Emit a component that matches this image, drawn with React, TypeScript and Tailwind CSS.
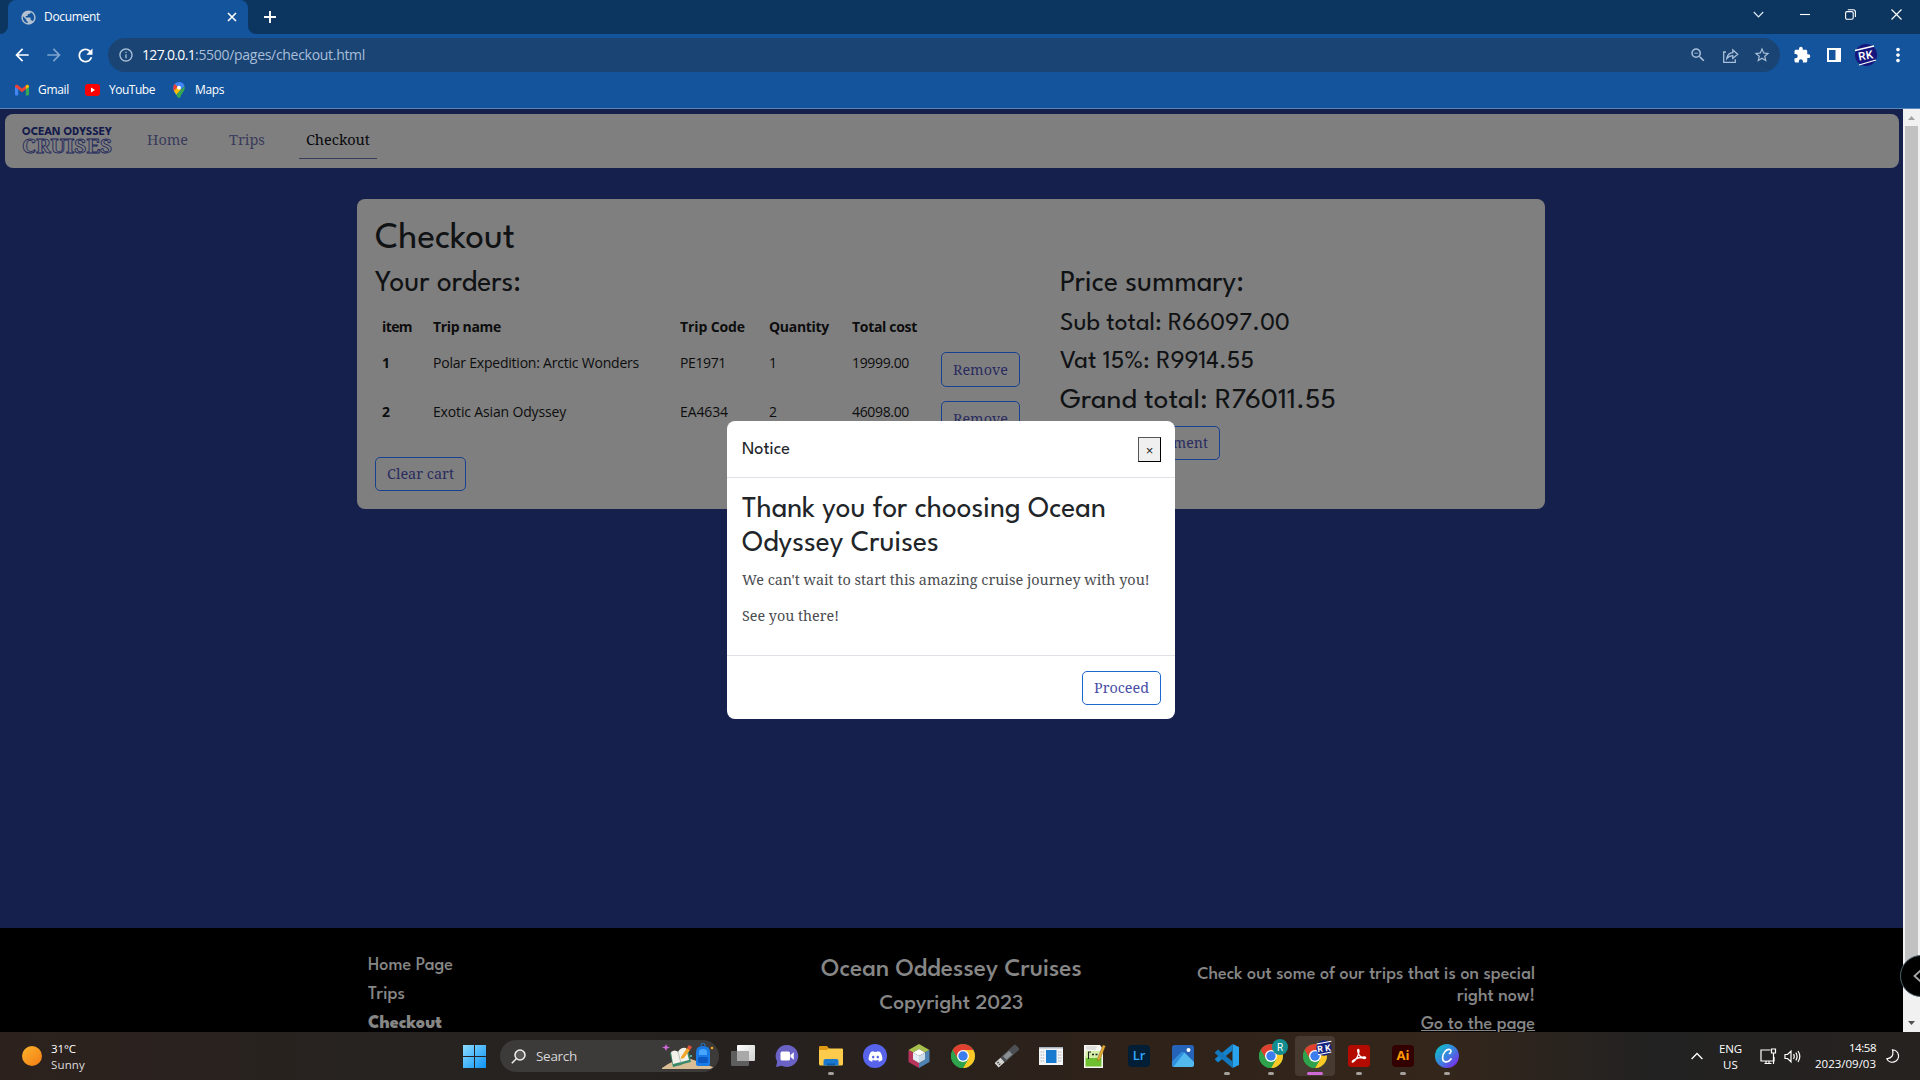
import React, { useLayoutEffect, useRef } from "react";
import { FaDiscord } from "react-icons/fa";
import {
  MdArrowBack,
  MdArrowForward,
  MdExtension,
  MdInfoOutline,
  MdMoreVert,
  MdPublic,
  MdRefresh,
  MdStarBorder,
  MdZoomOut,
} from "react-icons/md";

type FitProps = { w: number; className?: string; children: string; scale?: boolean };

/** One line of text that measures `w` pixels, by tracking or by font size. */
function Fit({ w, className = "", children, scale }: FitProps) {
  const ref = useRef<HTMLSpanElement>(null);
  useLayoutEffect(() => {
    const el = ref.current;
    if (!el) return;
    el.style.letterSpacing = "0px";
    el.style.fontSize = "";
    const natural = el.getBoundingClientRect().width;
    if (scale) {
      el.style.fontSize = (parseFloat(getComputedStyle(el).fontSize) * w) / natural + "px";
    } else {
      el.style.letterSpacing = (w - natural) / children.length + "px";
    }
  }, [w, children, scale]);
  return (
    <span ref={ref} className={"inline-block whitespace-nowrap align-top " + className}>
      {children}
    </span>
  );
}

const SERIF = "font-['Noto_Serif','DejaVu_Serif_Condensed','DejaVu_Serif',serif]";
const SPARTAN = "font-['League_Spartan',Lato,sans-serif] font-[450]";
const SEGOE = "font-['Open_Sans','Noto_Sans',sans-serif]";

/* ---------- browser chrome ---------- */

function TabStrip() {
  return (
    <div className="flex h-[34px] items-stretch bg-[#0c3560] text-white">
      <div className="flex w-2 items-end">
        <div className="h-2 w-2 bg-[#14549c]">
          <div className="h-2 w-2 rounded-br-lg bg-[#0c3560]" />
        </div>
      </div>
      <div className="flex w-[240px] items-center rounded-t-lg bg-[#14549c] pl-3 pr-[10px]">
        <MdPublic className="size-[17px] text-[#b4c1cf]" />
        <Fit w={56} className="ml-[7px] text-[12px] leading-4">Document</Fit>
        <svg className="ml-auto size-[12px]" viewBox="0 0 12 12" stroke="#fff" strokeWidth="1.6">
          <path d="M2 2l8 8M10 2l-8 8" />
        </svg>
      </div>
      <div className="flex w-2 items-end">
        <div className="h-2 w-2 bg-[#14549c]">
          <div className="h-2 w-2 rounded-bl-lg bg-[#0c3560]" />
        </div>
      </div>
      <svg className="ml-[8px] mt-[11px] size-[12px]" viewBox="0 0 12 12" stroke="#fff" strokeWidth="1.9">
        <path d="M6 0v12M0 6h12" />
      </svg>
      <div className="ml-auto flex h-[28px] items-center gap-[35px] pr-[18px]">
        <svg className="mr-px size-[11px]" viewBox="0 0 11 11" fill="none" stroke="#e2eaf3" strokeWidth="1.2">
          <path d="M.8 3l4.7 4.8L10.200 3" />
        </svg>
        <svg className="size-[10px]" viewBox="0 0 10 10" stroke="#fff" strokeWidth="1.100">
          <path d="M0 5.500h10" />
        </svg>
        <svg className="size-[11px]" viewBox="0 0 11 11" fill="none" stroke="#fff" strokeWidth="1.100">
          <rect x=".6" y="2.600" width="7.600" height="7.600" rx="1.400" />
          <path d="M2.800 .8h5.400a2.200 2.200 0 0 1 2.200 2.200v5" />
        </svg>
        <svg className="size-[11px]" viewBox="0 0 11 11" stroke="#fff" strokeWidth="1.200">
          <path d="M.5 .5l10 10M10.500 .5l-10 10" />
        </svg>
      </div>
    </div>
  );
}

function Avatar() {
  return (
    <svg className="size-[24px]" viewBox="0 0 24 24">
      <circle cx="12" cy="12" r="11" fill="#15177d" />
      <path d="M1 7.500L20 3M5 22l17-5" stroke="#fff" strokeWidth="1.300" />
      <text x="4" y="16.500" fontSize="11.500" fontWeight="500" fill="#fff" fontFamily="Roboto" textLength="15" transform="rotate(-10 12 12)">RK</text>
    </svg>
  );
}

function Toolbar() {
  return (
    <div className="flex h-[42px] items-center bg-[#14549c] text-white">
      <MdArrowBack className="ml-3 size-[20px]" />
      <MdArrowForward className="ml-3 size-[20px] text-[#7fa3cd]" />
      <MdRefresh className="ml-[11px] size-[21px]" />
      <div className="ml-[12px] flex h-[34px] w-[1672px] items-center rounded-full bg-[#1a4473] pl-[10px] text-[#a9bfd9]">
        <MdInfoOutline className="size-[16px]" />
        <div className={"ml-[8px] text-[14px] leading-5 " + SEGOE}>
          <Fit w={53} className="text-white">127.0.0.1</Fit>
          <Fit w={170}>:5500/pages/checkout.html</Fit>
        </div>
        <div className="ml-auto flex items-center pr-[9px]">
          <MdZoomOut className="size-[18px]" />
          <svg className="ml-[15px] size-[17px]" viewBox="0 0 17 17" fill="none" stroke="currentColor" strokeWidth="1.300">
            <path d="M4 5H1.700v10.300h11.600v-3M4.800 11.500c.5-3.600 2.600-5.600 6-5.900V3l4.900 4.200-4.900 4.200V8.700c-2.600.1-4.500 1-6 2.800z" />
          </svg>
          <MdStarBorder className="ml-[14px] size-[18px]" />
        </div>
      </div>
      <MdExtension className="ml-[13px] size-[18px]" />
      <svg className="ml-[16px] size-[14px]" viewBox="0 0 14 14" fill="#fff">
        <path d="M0 0h14v14H0zM2 2v10h6.500V2z" fillRule="evenodd" />
      </svg>
      <div className="ml-[13px]"><Avatar /></div>
      <MdMoreVert className="ml-[9px] size-[22px]" />
    </div>
  );
}

function Bookmarks() {
  return (
    <div className={"flex h-[33px] items-start border-b border-[#5b86b8] bg-[#14549c] pt-[6px] text-[12px] leading-4 text-white " + SEGOE}>
      <svg className="ml-[15px] mt-[2px] h-[12px] w-[14px]" viewBox="0 0 14 11">
        <path d="M0 1.500V10q0 1 1 1h2.200V4.500z" fill="#4285f4" />
        <path d="M10.800 11H13q1 0 1-1V1.500l-3.200 3z" fill="#34a853" />
        <path d="M0 1.800C0 .3 1.500-.3 2.600.5L7 4 11.400.5 10.800 4.800 7 7.700 3.200 4.800 0 2.500z" fill="#ea4335" />
        <path d="M10.800 4.800V1L11.400.5C12.500-.3 14 .3 14 1.800v.7z" fill="#fbbc04" />
      </svg>
      <Fit w={31} className="ml-[9px]">Gmail</Fit>
      <svg className="ml-[16px] mt-[2px] h-[12px] w-[15px]" viewBox="0 0 15 12">
        <rect width="15" height="12" rx="3" fill="#f00" />
        <path d="M6 3.500v5L10 6z" fill="#fff" />
      </svg>
      <Fit w={46} className="ml-[9px]">YouTube</Fit>
      <svg className="ml-[18px] h-[16px] w-[12px]" viewBox="0 0 12 16">
        <path d="M6 0a5.700 5.700 0 0 1 5.500 4L3 13C2 11 .3 9.500.3 6A5.700 5.700 0 0 1 6 0z" fill="#4285f4" />
        <path d="M.3 6C.3 4 1 2.800 2 2l3 3-4 4.500A7 7 0 0 1 .3 6z" fill="#ea4335" />
        <path d="M1 9l4-4.500 3 3L3.500 13z" fill="#fbbc04" />
        <path d="M11.500 4c.8 3-.5 5-2 7-1.500 1.800-2 5-3.500 5-1.300 0-1.800-1.800-2.700-3.300z" fill="#34a853" />
        <circle cx="6" cy="5.700" r="1.900" fill="#fff" />
      </svg>
      <Fit w={29} className="ml-[10px]">Maps</Fit>
    </div>
  );
}

/* ---------- page ---------- */

function OutlineButton({ w, className = "", children }: FitProps) {
  return (
    <button className={"flex items-center justify-center rounded-[5px] border border-[#17408f] text-[14.5px] font-normal text-[#2a2c60] " + SERIF + " " + className}>
      <Fit scale w={w}>{children}</Fit>
    </button>
  );
}

function Navbar() {
  return (
    <nav className={"mx-[5px] mt-[5px] flex h-[54px] w-[1894px] items-start rounded-lg bg-[#7f7f7f] text-[14.5px] leading-5 text-[#393b5b] " + SERIF}>
      <svg className="ml-[17px] mt-[11px] h-[30px] w-[91px]" viewBox="0 0 91 30">
        <text x="0" y="10" fontFamily="League Spartan, Lato" fontWeight="700" fontSize="12.500" fill="#141b4c" textLength="90" lengthAdjust="spacingAndGlyphs">OCEAN ODYSSEY</text>
        <text x="0" y="27.500" fontFamily="Noto Serif, DejaVu Serif" fontWeight="700" fontSize="19.500" fill="#7f7f7f" stroke="#20265a" strokeWidth=".8" textLength="90" lengthAdjust="spacingAndGlyphs">CRUISES</text>
      </svg>
      <Fit scale w={41} className="ml-[34px] mt-[16px]">Home</Fit>
      <Fit scale w={36} className="ml-[41px] mt-[15px]">Trips</Fit>
      <div className="ml-[34px] flex h-[45px] w-[78px] justify-center border-b border-[#393b5b] pt-[15px] text-[#08080c]">
        <Fit scale w={64}>Checkout</Fit>
      </div>
    </nav>
  );
}

const COLS = "grid grid-cols-[51px_247px_89px_83px_89px_79px] items-start justify-items-start pl-[7px]";

type Order = { n: string; name: string; nameW: number; code: string; codeW: number; qty: string; cost: string };
const ORDERS: Order[] = [
  { n: "1", name: "Polar Expedition: Arctic Wonders", nameW: 206, code: "PE1971", codeW: 46, qty: "1", cost: "19999.00" },
  { n: "2", name: "Exotic Asian Odyssey", nameW: 133, code: "EA4634", codeW: 48, qty: "2", cost: "46098.00" },
];

function CheckoutCard() {
  return (
    <section className="mt-[31px] ml-[357px] flex h-[310px] w-[1188px] flex-col rounded-lg bg-[#7f7f7f] pt-[20px] pl-[18px] text-[#101214]">
      <h1 className={"h-[39px] text-[34px] leading-10 " + SPARTAN}><Fit scale w={140}>Checkout</Fit></h1>
      <div className="flex">
        <div className="w-[685px]">
          <h2 className={"mt-[10px] h-8 text-[27px] leading-8 " + SPARTAN}><Fit scale w={146}>Your orders:</Fit></h2>
          <div className={"text-[14px] leading-5 text-[#0d0d0e] " + SEGOE}>
            <div className={COLS + " mt-[17px] h-[34px] font-bold"}>
              <Fit w={30}>item</Fit>
              <Fit w={68}>Trip name</Fit>
              <Fit w={65}>Trip Code</Fit>
              <Fit w={60}>Quantity</Fit>
              <Fit w={65}>Total cost</Fit>
            </div>
            {ORDERS.map((o) => (
              <div key={o.n} className={COLS + " h-[49px]"}>
                <span className="mt-[2px] font-bold">{o.n}</span>
                <Fit w={o.nameW} className="mt-[2px]">{o.name}</Fit>
                <Fit w={o.codeW} className="mt-[2px]">{o.code}</Fit>
                <span className="mt-[2px]">{o.qty}</span>
                <Fit w={57} className="mt-[2px]">{o.cost}</Fit>
                <OutlineButton w={55} className="mt-[1px] h-[35px] w-[79px] pt-[1px]">Remove</OutlineButton>
              </div>
            ))}
          </div>
          <OutlineButton w={67} className="mt-[8px] h-[34px] w-[91px]">Clear cart</OutlineButton>
        </div>
        <div className={SPARTAN}>
          <h2 className="mt-[10px] h-8 text-[27px] leading-8"><Fit scale w={184}>Price summary:</Fit></h2>
          <h3 className="mt-[10px] h-7 text-[24px] leading-7"><Fit scale w={230}>Sub total: R66097.00</Fit></h3>
          <h3 className="mt-[10px] h-7 text-[24px] leading-7"><Fit scale w={194}>Vat 15%: R9914.55</Fit></h3>
          <h2 className="mt-[9px] h-8 text-[27px] leading-8"><Fit scale w={276}>Grand total: R76011.55</Fit></h2>
          <OutlineButton w={119} className="mt-[9px] h-[34px] w-[160px] pl-[17px]">Confirm payment</OutlineButton>
        </div>
      </div>
    </section>
  );
}

function Modal() {
  return (
    <div className={"absolute left-[727px] top-[312px] flex h-[298px] w-[448px] flex-col rounded-lg bg-white text-[14.5px] text-[#4a4c50] " + SERIF}>
      <div className="flex h-[57px] items-start justify-between border-b border-[#dee2e6] pt-[16px] pr-[14px] pl-[15px]">
        <h5 className={"mt-[3px] text-[16px] leading-5 text-[#212529] " + SPARTAN}><Fit scale w={48}>Notice</Fit></h5>
        <button className="flex h-[25px] w-[23px] items-center justify-center border border-t-[#555] border-r-black border-b-black border-l-[#555] bg-[#efefef] pt-[2px] font-['Liberation_Sans'] text-[13px] text-[#222]">
          <span>×</span>
        </button>
      </div>
      <div className="h-[178px] border-b border-[#dee2e6] pt-[15px] pl-[15px]">
        <h2 className={"flex flex-col items-start text-[27px] leading-[34px] text-[#212529] " + SPARTAN}>
          <Fit scale w={364}>Thank you for choosing Ocean</Fit>
          <Fit scale w={197}>Odyssey Cruises</Fit>
        </h2>
        <p className="mt-[7px] h-6 leading-6"><Fit scale w={408}>We can't wait to start this amazing cruise journey with you!</Fit></p>
        <p className="mt-[12px] h-6 leading-6"><Fit scale w={97}>See you there!</Fit></p>
      </div>
      <div className="flex justify-end pt-[15px] pr-[14px]">
        <button className="flex h-[34px] w-[79px] items-center justify-center rounded-[5px] border border-[#1d68d0] text-[#4a4fa5]">
          <Fit scale w={55}>Proceed</Fit>
        </button>
      </div>
    </div>
  );
}

function Footer() {
  return (
    <footer className="mt-auto flex h-[104px] w-full shrink-0 overflow-hidden bg-black pl-[368px] font-['League_Spartan',Lato,sans-serif] text-[17px] font-medium text-[#868686]">
      <div className="flex w-[400px] flex-col items-start pt-[23px] leading-[29px]">
        <Fit scale w={85}>Home Page</Fit>
        <Fit scale w={37}>Trips</Fit>
        <Fit scale w={74} className="font-extrabold">Checkout</Fit>
      </div>
      <div className="flex w-[367px] flex-col items-center pt-[25px]">
        <h3 className="h-[34px] text-[24px] leading-[34px]"><Fit scale w={261}>Ocean Oddessey Cruises</Fit></h3>
        <h4 className="h-[34px] text-[20px] leading-[34px]"><Fit scale w={144}>Copyright 2023</Fit></h4>
      </div>
      <div className="flex w-[400px] flex-col items-end pt-[36px] leading-[22px]">
        <Fit scale w={338}>Check out some of our trips that is on special</Fit>
        <Fit scale w={78}>right now!</Fit>
        <Fit scale w={114} className="mt-[6px] underline">Go to the page</Fit>
      </div>
    </footer>
  );
}

function Scrollbar() {
  return (
    <div className="flex h-[923px] w-[17px] flex-col items-center bg-[#f1f1f1]">
      <svg className="h-[17px] w-[17px]" viewBox="0 0 17 17"><path d="M5 11l3.500-4 3.500 4z" fill="#a3a3a3" /></svg>
      <div className="h-[850px] w-[13px] bg-[#c1c1c1]" />
      <svg className="mt-auto h-[17px] w-[17px]" viewBox="0 0 17 17"><path d="M5 6l3.500 4L12 6z" fill="#505050" /></svg>
    </div>
  );
}

/* ---------- taskbar ---------- */

function Chrome() {
  return (
    <svg className="size-6" viewBox="0 0 24 24">
      <circle cx="12" cy="12" r="12" fill="#2fa24c" />
      <path d="M12 12L1.610 6A12 12 0 0 1 22.390 6z" fill="#e0402f" />
      <path d="M12 6h10.390A12 12 0 0 1 12 24l5.200-9z" fill="#fcc826" />
      <path d="M1.610 6L6.800 15 12 6z" fill="#e0402f" />
      <path d="M1.610 6A12 12 0 0 0 12 24l5.200-9H6.800z" fill="#2fa24c" />
      <circle cx="12" cy="12" r="6" fill="#fff" />
      <circle cx="12" cy="12" r="4.700" fill="#3b7ded" />
    </svg>
  );
}

function TaskCell({ children, running, active }: { children: React.ReactNode; running?: boolean; active?: boolean }) {
  return (
    <div className="relative flex h-12 w-[44px] items-center justify-center">
      {active && <div className="absolute inset-x-[2px] inset-y-[4px] rounded bg-white/10" />}
      <div className="relative">{children}</div>
      {running && <div className="absolute bottom-[5px] h-[3px] w-[6px] rounded-full bg-[#a5a09b]" />}
      {active && <div className="absolute bottom-[5px] h-[3px] w-[16px] rounded-full bg-[#cf6ad6]" />}
    </div>
  );
}

function TaskIcons() {
  return (
    <>
      <TaskCell>
        <svg className="size-6" viewBox="0 0 24 24">
          <defs><linearGradient id="tv" x2="1" y2="1"><stop stopColor="#fff" /><stop offset="1" stopColor="#cfcfcf" /></linearGradient></defs>
          <rect x="0" y="7" width="18" height="15" rx="1" fill="#5e5e5e" />
          <rect x="6" y="1" width="18" height="16" rx="1" fill="url(#tv)" />
          <rect x="6" y="7" width="12" height="10" fill="#a9a9a9" />
        </svg>
      </TaskCell>
      <TaskCell>
        <svg className="size-6" viewBox="0 0 24 24">
          <path d="M12 1a11.500 11 0 1 1-5.500 20.800L1 23l1.200-5.500A11.300 11 0 0 1 12 1z" fill="#6a62c4" />
          <rect x="5.500" y="7.500" width="9.500" height="9" rx="1.500" fill="#fff" />
          <path d="M15.500 11l3.300-2.700v7.400L15.500 13z" fill="#fff" />
        </svg>
      </TaskCell>
      <TaskCell running>
        <svg className="size-6" viewBox="0 0 24 24">
          <path d="M0 3q0-1 1-1h7l2.500 3H23v8H0z" fill="#e09b16" />
          <path d="M0 6h8l2-1.500h13q1 0 1 1V20q0 1.500-1.500 1.500h-21Q0 21.500 0 20z" fill="#fccb4b" />
          <path d="M4.500 21.500V17q0-2 2-2h11q2 0 2 2v4.500z" fill="#1a78cf" />
          <path d="M8 21.500v-2h8v2z" fill="#0d5aa6" />
        </svg>
      </TaskCell>
      <TaskCell>
        <div className="flex size-6 items-center justify-center rounded-full bg-[#5663ea] text-white"><FaDiscord className="size-[15px]" /></div>
      </TaskCell>
      <TaskCell>
        <svg className="size-6" viewBox="0 0 24 24">
          <path d="M12 0l10.500 6-4.500 2.500L12 5 6 8.500 1.500 6z" fill="#a6bf4d" />
          <path d="M1.500 6L6 8.500v7l6 3.500v5L1.500 18z" fill="#b8345a" />
          <path d="M22.500 6L18 8.500v7L12 19v5l10.500-6z" fill="#4e83b4" />
          <path d="M12 5l6 3.500-6 3.500-6-3.500z" fill="#fff" />
          <path d="M6 8.500l6 3.500v7l-6-3.500z" fill="#e4edf5" />
          <path d="M18 8.500L12 12v7l6-3.500z" fill="#cbdbe8" />
        </svg>
      </TaskCell>
      <TaskCell><Chrome /></TaskCell>
      <TaskCell>
        <svg className="size-6" viewBox="0 0 24 24">
          <g transform="rotate(-42 12 12)">
            <rect x="6" y="8.500" width="20" height="7" rx="1.500" fill="#4c5054" />
            <rect x="9" y="9.500" width="8" height="5" fill="#8b9094" />
            <rect x="-2" y="9" width="8" height="6" fill="#d5d5d3" />
            <rect x="0" y="10.300" width="2" height="1.200" fill="#444" />
            <rect x="0" y="12.600" width="2" height="1.200" fill="#444" />
          </g>
        </svg>
      </TaskCell>
      <TaskCell>
        <svg className="size-6" viewBox="0 0 24 24">
          <rect x="0" y="3" width="24" height="18" fill="#f3f5f7" />
          <rect x="0" y="3" width="24" height="1.500" fill="#a9b4bd" />
          <rect x="7" y="6" width="10.500" height="13" fill="#187bd0" />
          <path d="M1.500 8h4M1.500 11h4M1.500 14h4M1.500 17h4M19 8h3.500M19 11h3.500M19 14h3.500M19 17h3.500" stroke="#a7b0b8" strokeWidth=".9" strokeDasharray="1.500 .7" />
        </svg>
      </TaskCell>
      <TaskCell>
        <svg className="size-6" viewBox="0 0 24 24">
          <path d="M1 1h16l3 4v19H1z" fill="#f7f7f2" />
          <path d="M2.500 12h16v10.500h-16z" fill="#6fc02f" />
          <path d="M2.500 7h16v7h-16z" fill="#d5eea9" />
          <path d="M3 3h11M3 5h10" stroke="#bbb" strokeWidth=".8" />
          <path d="M5 8h3M5.500 8v7" stroke="#222" strokeWidth="1.100" />
          <path d="M9 10.500h2M12.500 10.500h2" stroke="#222" strokeWidth="1.500" />
          <path d="M14.500 14.500l5.500-13.500 2.500 1L17 15.500l-2.500 1.500z" fill="#e2a934" stroke="#76561a" strokeWidth=".4" />
        </svg>
      </TaskCell>
      <TaskCell><div className="flex size-[22px] items-center justify-center rounded bg-[#001e36] font-['Open_Sans'] text-[13px] font-semibold text-[#31a8ff]">Lr</div></TaskCell>
      <TaskCell>
        <svg className="size-[22px]" viewBox="0 0 22 22">
          <rect width="22" height="22" rx="2.500" fill="#2563b8" />
          <path d="M0 17l9-9q2-2 4 0l9 9v2.500q0 2.500-2.500 2.500h-17Q0 22 0 19.500z" fill="#51b9ee" />
          <path d="M0 17l9-9q2-2 3.500-.5L2 21.300Q0 21 0 19.500z" fill="#2f8fdd" />
          <circle cx="16.500" cy="5" r="2" fill="#fff" />
        </svg>
      </TaskCell>
      <TaskCell running>
        <svg className="size-6" viewBox="0 0 24 24">
          <path d="M17.500 0L24 3v18l-6.500 3z" fill="#29a3ee" />
          <path d="M17.500 0v6.500L3 18.500.3 16q-.6-.7 0-1.400z" fill="#1483cc" />
          <path d="M17.500 24v-6.500L3 5.500.3 8q-.6.700 0 1.400z" fill="#1277bd" />
        </svg>
      </TaskCell>
      <TaskCell running>
        <Chrome />
        <div className="absolute -top-[5px] left-[13px] flex size-[16px] items-center justify-center rounded-full bg-[#128c8e] font-['Roboto'] text-[10px] text-white">R</div>
      </TaskCell>
      <TaskCell active>
        <Chrome />
        <svg className="absolute -top-[4px] left-[13px] size-[16px]" viewBox="0 0 24 24">
          <circle cx="12" cy="12" r="11.500" fill="#14227d" />
          <path d="M1 6L23 2M3 22l20-4" stroke="#fff" strokeWidth="1.600" />
          <text x="2" y="17" fontSize="13" fontWeight="700" fill="#fff" fontFamily="Roboto" textLength="20" transform="rotate(-8 12 12)">RK</text>
        </svg>
      </TaskCell>
      <TaskCell running>
        <svg className="size-[22px]" viewBox="0 0 22 22">
          <rect width="22" height="22" rx="3" fill="#b30b00" />
          <path d="M5 17c2.500-1.500 6-6.500 6-11 0-2-1.500-2-1.300 0 .4 4 4 7.500 6.500 7.500 2 0 1.800-1.500 0-1.500-3.500 0-8 1.500-10.500 3-1.800 1.200-1.900 2.700-.7 2z" fill="none" stroke="#fff" strokeWidth="1.300" />
        </svg>
      </TaskCell>
      <TaskCell running><div className="flex size-[22px] items-center justify-center rounded bg-[#330000] font-['Open_Sans'] text-[13px] font-bold text-[#ff9a00]">Ai</div></TaskCell>
      <TaskCell running>
        <svg className="size-6" viewBox="0 0 24 24">
          <defs><linearGradient id="cv" x1="0" y1=".2" x2=".8" y2="1"><stop stopColor="#10bfca" /><stop offset=".55" stopColor="#3f7be0" /><stop offset="1" stopColor="#7d2ae8" /></linearGradient></defs>
          <circle cx="12" cy="12" r="12" fill="url(#cv)" />
          <path d="M14.500 9.500c1.500-.5 2.300-3.500.2-4C11.500 4.800 7.800 9 7.600 13.500c-.1 5.800 5.600 5.500 8.400 1.500" fill="none" stroke="#fff" strokeWidth="1.700" strokeLinecap="round" />
        </svg>
      </TaskCell>
    </>
  );
}

function SearchArt() {
  return (
    <svg className="ml-auto mr-[4px] h-[27px] w-[54px]" viewBox="0 0 54 27">
      <path d="M1 25Q20 12 30 16t22 8q-1 2-5 2H1z" fill="#d9bd94" />
      <path d="M9 10l8-2 3 2 7-4 3 13-8 2-2 1-8 2z" fill="#3a8a6b" />
      <path d="M10 9q4-3 7 0 3-5 8-4l3 12-8 2-8 2z" fill="#f4f1ea" />
      <path d="M17 9l3 11" stroke="#9aa" strokeWidth=".7" />
      <path d="M20 14l6-9 3 2-6 8-3 1z" fill="#f4a62a" /><path d="M26 5l2-3 3 2-2 3z" fill="#e0513a" />
      <path d="M5 1l1 2.500L9 4.500 6 5.500 5 8 4 5.500 1 4.500 4 3.500z" fill="#d36be0" />
      <path d="M35 9q0-6 7-6t7 6v12q0 2-2 2H37q-2 0-2-2z" fill="#187be8" />
      <path d="M38 9q0-3 4-3t4 3v3h-8z" fill="#46a6ff" /><rect x="37" y="14" width="10" height="6" rx="1.500" fill="#0d59c4" />
      <path d="M40 3q0-3 2-3t2 3" fill="none" stroke="#187be8" />
      <circle cx="51" cy="5" r="1.300" fill="#f5a623" /><circle cx="30" cy="13" r="1" fill="#5fd0c0" />
    </svg>
  );
}

function Taskbar() {
  return (
    <div className={"flex h-12 items-center bg-[linear-gradient(90deg,#2c211d,#262320_22%,#26211f_40%,#2f2219_60%,#34261a_75%,#222_86%,#26221f)] text-[12px] text-white " + SEGOE}>
      <div className="ml-[22px] size-[20px] rounded-full bg-linear-to-br from-[#f9b52c] to-[#f47a12]" />
      <div className="ml-[9px] flex w-[100px] flex-col items-start pt-[2px] leading-4">
        <Fit w={25} className="text-[11.5px]">31°C</Fit>
        <Fit w={34} className="text-[11.5px] text-[#ddd]">Sunny</Fit>
      </div>
      <svg className="ml-[312px] size-[23px]" viewBox="0 0 23 23">
        <defs><linearGradient id="win" gradientUnits="userSpaceOnUse" x2="23" y2="23"><stop stopColor="#8adcff" /><stop offset="1" stopColor="#0d93f5" /></linearGradient></defs>
        <path d="M0 0h11v11H0zM12 0h11v11H12zM0 12h11v11H0zM12 12h11v11H12z" fill="url(#win)" />
      </svg>
      <div className="ml-[14px] flex h-[32px] w-[219px] items-center rounded-full bg-[#3d3b39]">
        <svg className="ml-[11px] size-[15px]" viewBox="0 0 15 15" fill="#5a5a5a" stroke="#f0f0f0" strokeWidth="1.500">
          <circle cx="9" cy="6" r="5" /><path d="M5.300 9.700L.8 14.200" />
        </svg>
        <Fit w={41} className="ml-[10px] text-[13.5px] text-[#d6d6d6]">Search</Fit>
        <SearchArt />
      </div>
      <div className="ml-[2px] flex"><TaskIcons /></div>
      <svg className="ml-auto h-[8px] w-[12px]" viewBox="0 0 12 8" fill="none" stroke="#fff" strokeWidth="1.300"><path d="M.6 7L6 1.500 11.400 7" /></svg>
      <div className="ml-[16px] flex w-[23px] flex-col items-center pt-[2px] text-[11.5px] leading-4">
        <Fit w={23}>ENG</Fit>
        <Fit w={15}>US</Fit>
      </div>
      <svg className="ml-[18px] size-[17px]" viewBox="0 0 17 17" fill="none" stroke="#fff" strokeWidth="1.200">
        <path d="M10.500 2H1v11h13V9M4.500 15.500h7M6 13v2.500M9 13v2.500" /><path d="M11.500 1h4v4h-4zM13.500 5v11" />
      </svg>
      <svg className="ml-[7px] size-[17px]" viewBox="0 0 17 17" fill="none" stroke="#fff" strokeWidth="1.200">
        <path d="M1 6.500h2.500L7 3.200v10.600l-3.500-3.300H1zM9.500 6.200q1.500 2.300 0 4.600M11.800 4.600q2.600 3.900 0 7.800M14 3q3.600 5.500 0 11" />
      </svg>
      <div className="ml-[14px] flex w-[61px] flex-col items-end text-[11.5px] leading-4">
        <Fit w={27}>14:58</Fit>
        <Fit w={61}>2023/09/03</Fit>
      </div>
      <svg className="mr-[20px] ml-[10px] size-[14px]" viewBox="0 0 14 14" fill="none" stroke="#fff" strokeWidth="1.200">
        <path d="M6.500 .8A6.200 6.200 0 1 1 .8 9.800Q8.500 9 6.500 .8z" />
      </svg>
    </div>
  );
}

export default function App() {
  return (
    <div className="flex h-[1080px] w-[1920px] flex-col overflow-hidden font-['Open_Sans',sans-serif]">
      <TabStrip />
      <Toolbar />
      <Bookmarks />
      <div className="relative flex h-[923px] overflow-hidden">
        <main className="flex h-[923px] w-[1903px] flex-col bg-[#16204d]">
          <Navbar />
          <CheckoutCard />
          <Footer />
        </main>
        <Scrollbar />
        <Modal />
        <div className="absolute left-[1900px] top-[846px] flex size-[42px] items-center rounded-full border border-[#4d6068] bg-black pl-[12px]">
          <svg className="h-[14px] w-[8px]" viewBox="0 0 8 14" fill="none" stroke="#aaa" strokeWidth="1.800"><path d="M8 1L1.500 7 8 13" /></svg>
        </div>
      </div>
      <Taskbar />
    </div>
  );
}
